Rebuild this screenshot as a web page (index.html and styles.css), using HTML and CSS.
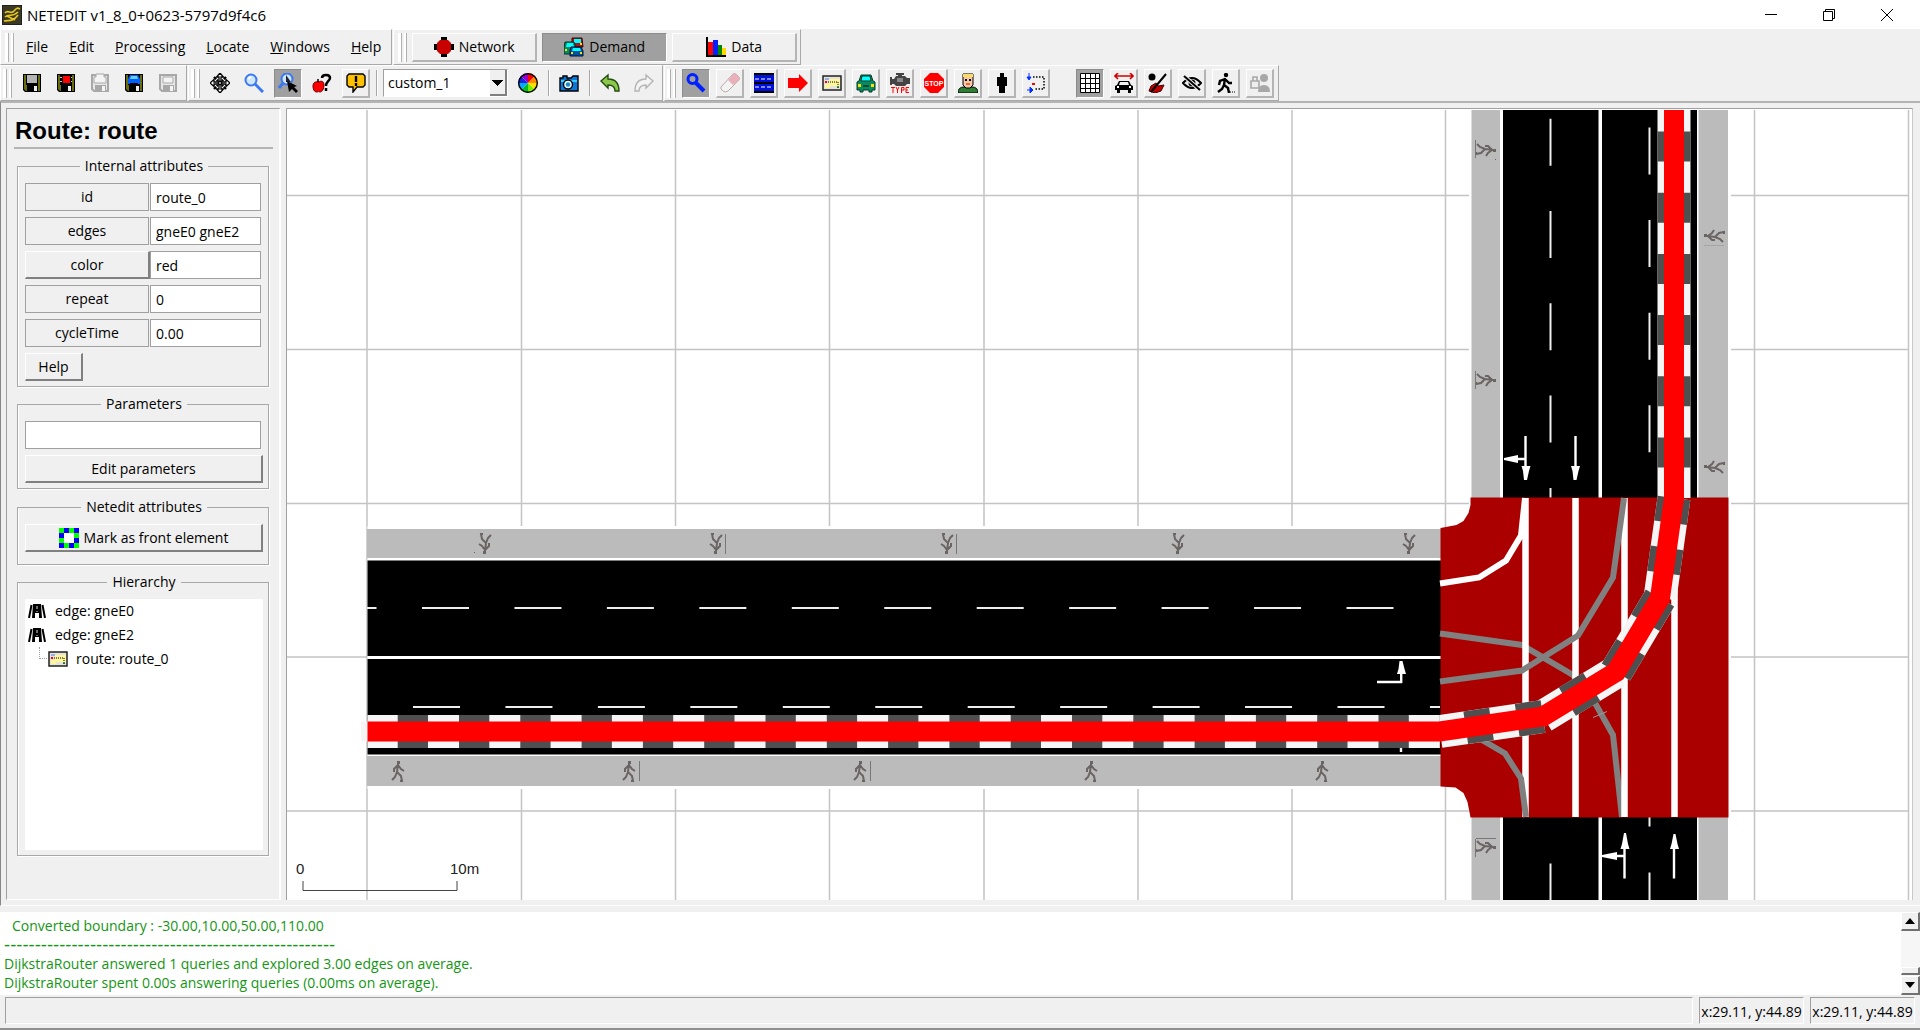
FILE: index.html
```html
<!DOCTYPE html>
<html lang="en">
<head>
	<meta charset="utf-8">
	<meta name="viewport" content="width=device-width, initial-scale=1">
	<title>NETEDIT v1_8_0+0623-5797d9f4c6</title>
	<link rel="stylesheet" href="styles.css">
</head>
<body>

<!-- shared icons -->
<svg class="defs" width="0" height="0" aria-hidden="true">
	<symbol id="i-disk" viewBox="0 0 20 20">
		<path d="M1 1h18v18H3l-2-2z" fill="#000"/>
		<path d="M2 2h16v16H4l-2-2z" fill="#6b6b10"/>
		<path d="M4 1h12v11H4z" fill="#000"/>
		<path d="M5 12h11v7H5z" fill="#000"/>
		<path d="M12 13h3v5h-3z" fill="#eee"/>
	</symbol>
	<symbol id="i-disk-off" viewBox="0 0 20 20">
		<path d="M2 2h16v16H4l-2-2z" fill="#e8e8e8" stroke="#a8a8a8" stroke-width="2"/>
		<path d="M5 12h11v6H5z" fill="#a8a8a8"/>
		<path d="M12 13h3v5h-3z" fill="#f4f4f4"/>
	</symbol>
	<symbol id="i-route" viewBox="0 0 20 20">
		<path d="M1 3h18v14H1z" fill="#e6e2dc" stroke="#222" stroke-width="1.500"/>
		<path d="M7 6h11v7H7zM3 11h5v4H3z" fill="#fff59a"/>
		<path d="M3 5h4v2H3z" fill="#8db4f0"/>
		<path d="M4 9h12M16 9v6" fill="none" stroke="#000" stroke-width="1" stroke-dasharray="1 1"/>
		<path d="M3 8h2v2H3z" fill="#f00"/>
		<path d="M15 14h2v1h-2z" fill="#080"/>
	</symbol>
	<symbol id="i-edge" viewBox="0 0 18 14">
		<path d="M5 0h8l1 14h-3V9H7v5H4z" fill="#000"/>
		<path d="M3.500 1L1 14M14.500 1L17 14" stroke="#000" stroke-width="2" fill="none"/>
		<path d="M9 2v3M9 7v1" stroke="#ddd" stroke-width="1"/>
	</symbol>
	<symbol id="i-carfront" viewBox="0 0 20 20">
		<path d="M5 2h10l2 6 2 1v8h-3v2h-3v-2H7v2H4v-2H1V9l2-1z" fill="#0a8a60" stroke="#003c28"/>
		<path d="M6 3h8l1 5H5z" fill="#0ff" stroke="#003c28"/>
		<path d="M2 11h3v3H2zM15 11h3v3h-3z" fill="#ffe000"/>
		<path d="M7 12h6v2H7z" fill="#004a35"/>
	</symbol>
	<symbol id="walker" viewBox="-10 -11 20 22" overflow="visible">
		<path d="M-1-10h3v3h-3z" fill="#6a6464"/>
		<path d="M0-7L-1 1l4 4 1 5h-2M-1 1l-2 5-3 3M0-6l-4 4v3M0-6l3 4 3 2" fill="none" stroke="#6a6464" stroke-width="2"/>
	</symbol>
</svg>

<header class="titlebar">
	<svg class="logo" viewBox="0 0 20 20"><path d="M0 0h20v20H0z" fill="#222"/><path d="M1 1h18v18H1z" fill="#3b3824"/><path d="M3 8c3-4 6 2 9-2s4-3 6-2M3 12c4-4 7 1 13-5M2 16c5-1 9 1 14-6M5 11l8 4" fill="none" stroke="#e6c81c" stroke-width="1.600"/></svg>
	<span class="title">NETEDIT v1_8_0+0623-5797d9f4c6</span>
	<button class="winbtn" aria-label="Minimize"><svg viewBox="0 0 12 12"><path d="M0 5.500h12" stroke="#000"/></svg></button>
	<button class="winbtn" aria-label="Restore"><svg viewBox="0 0 12 12"><path d="M.5 2.500h9v9h-9zM2.500 2.500v-2h9v9h-2" fill="none" stroke="#000"/></svg></button>
	<button class="winbtn" aria-label="Close"><svg viewBox="0 0 12 12"><path d="M0 0l12 12M12 0L0 12" stroke="#000"/></svg></button>
</header>

<div class="toolrow">
	<nav class="dock menubar">
		<span class="grip"></span>
		<button><u>F</u>ile</button>
		<button><u>E</u>dit</button>
		<button><u>P</u>rocessing</button>
		<button><u>L</u>ocate</button>
		<button><u>W</u>indows</button>
		<button><u>H</u>elp</button>
	</nav>
	<div class="dock modes">
		<span class="grip"></span>
		<button class="mode">
			<svg viewBox="0 0 20 20"><path d="M7 0h6v20H7zM0 7h20v6H0z" fill="#000"/><path d="M6 3h8l3 3v8l-3 3H6l-3-3V6z" fill="#c80000"/></svg>
			Network
		</button>
		<button class="mode pressed">
			<svg viewBox="0 0 20 20">
				<path d="M8 1h10l1 9H8z" fill="#a01818" stroke="#400"/><path d="M10 2h7v4h-7z" fill="#0ff"/>
				<path d="M1 5h9l2 6v6H0v-6z" fill="#0a8a60" stroke="#033"/><path d="M3 6h6l1 4H2z" fill="#0ff"/><path d="M1 12h2v2H1zM16 6h2v2h-2z" fill="#ffe000"/>
				<path d="M7 10h10l2 4v5H6v-5z" fill="#0050a0" stroke="#013"/><path d="M9 11h7l1 3H8z" fill="#0ff"/><path d="M7 15h2v2H7zM16 15h2v2h-2z" fill="#ffe000"/>
			</svg>
			Demand
		</button>
		<button class="mode">
			<svg viewBox="0 0 20 20"><path d="M2 5h5v14H2z" fill="#f00"/><path d="M7 3h5v16H7z" fill="#0020ff"/><path d="M12 8h4v11h-4z" fill="#080"/><path d="M16 11h4v8h-4z" fill="#ffd800"/><path d="M1 0v19h19" fill="none" stroke="#000" stroke-width="2"/></svg>
			Data
		</button>
	</div>
</div>

<div class="toolrow">
	<div class="dock">
		<span class="grip"></span>
		<button class="tool flat" aria-label="Save network"><svg viewBox="0 0 20 20"><use href="#i-disk"/><path d="M5 2h10v8H5z" fill="#b4b4b4"/></svg></button>
		<button class="tool flat" aria-label="Save additionals"><svg viewBox="0 0 20 20"><use href="#i-disk"/><path d="M7 3h7v7H7z" fill="#f00"/><path d="M4 4h2v1H4zM4 8h2v1H4zM15 4h1v1h-1zM15 8h1v1h-1z" fill="#ccc"/></svg></button>
		<button class="tool flat" aria-label="Save TLS programs"><svg viewBox="0 0 20 20"><use href="#i-disk-off"/><path d="M6 1h8v3h2v6H4V4h2z" fill="#f4f4f4" stroke="#a8a8a8"/></svg></button>
		<button class="tool flat" aria-label="Save demand elements"><svg viewBox="0 0 20 20"><use href="#i-disk"/><path d="M6 2h8l2 4v5h-2v-1H6v1H4V6z" fill="#0060ff"/><path d="M7 3h6l1 3H6z" fill="#6cf"/></svg></button>
		<button class="tool flat" aria-label="Save data elements"><svg viewBox="0 0 20 20"><use href="#i-disk-off"/><path d="M5 4h10v6H5z" fill="#f4f4f4" stroke="#a8a8a8"/></svg></button>
	</div>
	<div class="dock">
		<span class="grip"></span>
		<button class="tool flat" aria-label="Recenter view"><svg viewBox="0 0 20 20"><g fill="#fff" stroke="#000" stroke-width="1.300"><path id="mv" d="M10 0l3.500 4H11v4.500H9V4H6.500z"/><use href="#mv" transform="rotate(90 10 10)"/><use href="#mv" transform="rotate(180 10 10)"/><use href="#mv" transform="rotate(270 10 10)"/></g><path d="M4 4l4 4M16 4l-4 4M4 16l4-4M16 16l-4-4" stroke="#000" stroke-width="2.400" stroke-dasharray="3 1"/></svg></button>
		<button class="tool flat" aria-label="Edit viewport"><svg viewBox="0 0 20 20"><circle cx="7" cy="7" r="5.500" fill="#cfe6ff" stroke="#3c78f0" stroke-width="2"/><path d="M11 11l8 8" stroke="#3c78f0" stroke-width="3"/><path d="M4 6l3-2" stroke="#fff" stroke-width="2"/></svg></button>
		<button class="tool pressed" aria-label="Zoom style"><svg viewBox="0 0 20 20"><circle cx="9" cy="6" r="5.500" fill="#cfe6ff" stroke="#3c78f0" stroke-width="2"/><path d="M5 10l-4 5" stroke="#3c78f0" stroke-width="3"/><path d="M8 2l5 7H8z" fill="#223"/><path d="M9 8l10 5-3 1 4 4-2 2-4-4-3 3z" fill="#000"/></svg></button>
		<button class="tool flat" aria-label="What is this"><svg viewBox="0 0 20 20"><path d="M7 9c3-2 5 0 5 3 0 4-2 7-4 7-1 0-1-1-3 0-3 0-4-3-4-6s2-5 6-4z" fill="#f00" stroke="#600"/><path d="M6 9V6" stroke="#000" stroke-width="1.500"/><path d="M10 5c0-4 8-4 8 0 0 3-4 3-4 8M14 15v3" fill="none" stroke="#000" stroke-width="2.500"/></svg></button>
		<button class="tool" aria-label="Messages"><svg viewBox="0 0 20 20"><path d="M3 1h14l2 2v9l-2 2h-6l-4 5v-5H3l-2-2V3z" fill="#ffc000" stroke="#000" stroke-width="1.400"/><path d="M10 3v6M10 10v3" stroke="#000" stroke-width="2.400"/></svg></button>
		<span class="sep"></span>
		<select class="scheme" aria-label="Coloring scheme"><option>custom_1</option></select>
		<button class="tool flat" aria-label="Edit coloring"><svg viewBox="0 0 20 20"><path d="M10 10V0A10 10 0 0 1 17 3z" fill="#f00"/><path d="M10 10l7-7a10 10 0 0 1 3 7z" fill="#f80"/><path d="M10 10h10a10 10 0 0 1-3 7z" fill="#ffe000"/><path d="M10 10l7 7a10 10 0 0 1-7 3z" fill="#7e0"/><path d="M10 10v10a10 10 0 0 1-7-3z" fill="#0b2"/><path d="M10 10l-7 7a10 10 0 0 1-3-7z" fill="#0af"/><path d="M10 10H0a10 10 0 0 1 3-7z" fill="#22d"/><path d="M10 10L3 3a10 10 0 0 1 7-3z" fill="#90c"/><circle cx="10" cy="10" r="9.300" fill="none" stroke="#000" stroke-width="1.400"/></svg></button>
		<span class="sep"></span>
		<button class="tool flat" aria-label="Snapshot"><svg viewBox="0 0 20 20"><path d="M1 5h3V3h4v2h4l2-2h5v15H1z" fill="#0a78d8" stroke="#000" stroke-width="1.400"/><path d="M2 7h16v2H2z" fill="#3cf"/><circle cx="9" cy="11.500" r="4.500" fill="#dff" stroke="#000" stroke-width="1.400"/><circle cx="9" cy="11.500" r="2.200" fill="#28c"/></svg></button>
		<span class="sep"></span>
		<button class="tool flat" aria-label="Undo"><svg viewBox="0 0 20 20"><path d="M1 8l7-6v4c7 0 11 4 11 12h-4c0-4-2-6-7-6v3z" fill="#8cc84a" stroke="#234d10" stroke-width="1.400"/></svg></button>
		<button class="tool flat" aria-label="Redo"><svg viewBox="0 0 20 20"><path d="M19 8l-7-6v4C5 6 1 10 1 18h4c0-4 2-6 7-6v3z" fill="#f4f4f4" stroke="#b4b4b4" stroke-width="1.400"/></svg></button>
	</div>
	<div class="dock">
		<span class="grip"></span>
		<button class="tool pressed" aria-label="Inspect"><svg viewBox="0 0 20 20"><circle cx="6.500" cy="6" r="4.500" fill="none" stroke="#0020ff" stroke-width="3"/><path d="M10 10l8 8" stroke="#0020ff" stroke-width="4"/></svg></button>
		<button class="tool" aria-label="Delete"><svg viewBox="0 0 20 20"><path d="M1 14L13 1q2-1 3 0l3 3q1 2 0 3L8 18q-3 2-5 0l-2-2z" fill="#f3f3f3" stroke="#b8acac"/><path d="M8 7l5-6q2-1 3 0l3 3q1 2 0 3l-6 5z" fill="#eab0ba"/></svg></button>
		<button class="tool" aria-label="Edges"><svg viewBox="0 0 20 20"><path d="M0 0h20v20H0z" fill="#000"/><path d="M0 2h20v7H0zM0 11h20v7H0z" fill="#0010d8"/><path d="M1 6h18M1 14h18" stroke="#fff" stroke-width="1" stroke-dasharray="4 2"/></svg></button>
		<button class="tool" aria-label="Move to route"><svg viewBox="0 0 20 20"><path d="M0 5h11V1l9 9-9 9v-4H0z" fill="#f00"/></svg></button>
		<button class="tool" aria-label="Routes"><svg viewBox="0 0 20 20"><use href="#i-route"/></svg></button>
		<button class="tool" aria-label="Vehicles"><svg viewBox="0 0 20 20"><use href="#i-carfront"/></svg></button>
		<button class="tool" aria-label="Vehicle types"><svg viewBox="0 0 20 20"><path d="M6 0h8v2h-2v1h3l2 2h3v6h-3l-2 2H6l-2-2H2v1H0V4h2v2h2l2-3h2V2H6z" fill="#444"/><path d="M7 5h6v4H7z" fill="#888"/><path d="M1 14.500h4M3 14v6M6 14l1.500 3L9 14M7.500 17v3M11.500 20v-5.500H14V17h-2.500M19 14.500h-3V19.500h3M16 17h2" fill="none" stroke="#f00"/></svg></button>
		<button class="tool" aria-label="Stops"><svg viewBox="0 0 20 20"><path d="M6 0h8l6 6v8l-6 6H6l-6-6V6z" fill="#f00"/><text x="10" y="13" class="stoptext">STOP</text></svg></button>
		<button class="tool" aria-label="Persons"><svg viewBox="0 0 20 20"><path d="M0 20q0-6 6-6h8q6 0 6 6z" fill="#2e7d32" stroke="#000"/><path d="M5 1h10v11l-3 3H8l-3-3z" fill="#f8c8a0" stroke="#000"/><path d="M5 1h10v3H5z" fill="#f6dc60"/><path d="M7 6h2v2H7zM11 6h2v2h-2z" fill="#000"/><path d="M8 11h4" stroke="#c00"/></svg></button>
		<button class="tool" aria-label="Person plans"><svg viewBox="0 0 20 20"><path d="M8 0h4v4h-4zM5 4h10v9h-2v7H7v-7H5z" fill="#000"/></svg></button>
		<button class="tool" aria-label="Person stops"><svg viewBox="0 0 20 20"><path d="M3 0v6M1 4l2 3 2-3zM1 17h5M4 14l3 3-3 3z" fill="#0030ff" stroke="#0030ff"/><path d="M7 4h11v12H9" fill="none" stroke="#000" stroke-width="1.500" stroke-dasharray="1.500 1.500"/><path d="M6 10h3v2H6z" fill="#f00"/></svg></button>
		<span class="space"></span>
		<button class="tool pressed" aria-label="Toggle grid"><svg viewBox="0 0 20 20"><path d="M.5.5h19v19H.5z" fill="#fff"/><path d="M.5.5h19v19H.5zM5.500 0v20M10.500 0v20M15.500 0v20M0 5.500h20M0 10.500h20M0 15.500h20" fill="none" stroke="#000"/></svg></button>
		<button class="tool" aria-label="Spread vehicles"><svg viewBox="0 0 20 20"><path d="M1 3h18M4 0L1 3l3 3M16 0l3 3-3 3" fill="none" stroke="#d00000" stroke-width="1.600"/><path d="M5 8h10l2 4 2 1v4h-2v3h-3v-3H6v3H3v-3H1v-4l2-1z" fill="#000"/><path d="M6 9h8l1 3H5z" fill="#f0f0f0"/><path d="M3 13h2v2H3zM15 13h2v2h-2z" fill="#fff"/></svg></button>
		<button class="tool" aria-label="Hide shapes"><svg viewBox="0 0 20 20"><circle cx="4" cy="4" r="3.500" fill="#000"/><path d="M3 13l5-3 2 3 6-1-3 6-6 2-6-2z" fill="#c00000" stroke="#400"/><path d="M18 1L3 19" stroke="#000" stroke-width="2"/></svg></button>
		<button class="tool" aria-label="Hide non inspected"><svg viewBox="0 0 20 20"><path d="M1 10q9-10 18 0-9 10-18 0z" fill="none" stroke="#000" stroke-width="2"/><circle cx="10" cy="10" r="3.500" fill="#000"/><path d="M2 3l16 14" stroke="#f0f0f0" stroke-width="4"/><path d="M2 3l16 14" stroke="#000" stroke-width="2"/></svg></button>
		<button class="tool" aria-label="Show person plans"><svg viewBox="0 0 20 20"><circle cx="10" cy="2" r="2.200" fill="#000"/><path d="M9 5l-1 7 4 3 1 5M8 12l-2 4-4 3M9 6L4 8l-1 4M9 6l4 4h3" fill="none" stroke="#000" stroke-width="2.400"/><path d="M14 19h5" stroke="#000" stroke-dasharray="1 1"/></svg></button>
		<button class="tool" aria-label="Lock person"><svg viewBox="0 0 20 20"><path d="M1 8h8v7H1zM3 8V4h4v4" fill="#eee" stroke="#a8a8a8" stroke-width="1.600"/><circle cx="14" cy="5" r="4" fill="#a8a8a8"/><path d="M8 19q0-7 6-7t6 7z" fill="#a8a8a8"/></svg></button>
	</div>
</div>

<main class="workspace">
	<aside class="sidebar">
		<h1>Route: route</h1>

		<fieldset>
			<legend>Internal attributes</legend>
			<div class="attrs">
				<label for="id">id</label><input id="id" type="text" value="route_0">
				<label for="edges">edges</label><input id="edges" type="text" value="gneE0 gneE2">
				<button class="btn">color</button><input type="text" aria-label="color" value="red">
				<label for="repeat">repeat</label><input id="repeat" type="text" value="0">
				<label for="cycleTime">cycleTime</label><input id="cycleTime" type="text" value="0.00">
			</div>
			<button class="btn help">Help</button>
		</fieldset>

		<fieldset>
			<legend>Parameters</legend>
			<input class="wide" type="text" aria-label="Parameters">
			<button class="btn wide">Edit parameters</button>
		</fieldset>

		<fieldset class="netedit">
			<legend>Netedit attributes</legend>
			<button class="btn wide">
				<svg viewBox="0 0 20 20" width="20" height="20"><path d="M0 0h20v20H0z" fill="#00ff00"/><path d="M5 0h5v5H5zM15 0h5v5h-5zM0 5h5v5H0zM15 10h5v5h-5zM0 15h5v5H0zM10 15h5v5h-5z" fill="#0000ff"/><path d="M5 5h10v10H5z" fill="#fff"/></svg>
				Mark as front element
			</button>
		</fieldset>

		<fieldset class="hierarchy">
			<legend>Hierarchy</legend>
			<ul class="tree">
				<li><svg class="edge"><use href="#i-edge"/></svg>edge: gneE0</li>
				<li><svg class="edge"><use href="#i-edge"/></svg>edge: gneE2</li>
				<li><span class="branch"></span><svg class="route"><use href="#i-route"/></svg>route: route_0</li>
			</ul>
		</fieldset>
	</aside>

	<section class="view">
		<svg class="map" width="100%" height="100%">
			<g transform="translate(-287 -109)">
				<!-- grid, 10m -->
				<path class="grid" d="M367 110v790M521.500 110v790M675.500 110v790M829.500 110v790M984 110v790M1138 110v790M1292 110v790M1445.500 110v790M1754.500 110v790M1908.500 110v790M287 195.500h1622M287 349.500h1622M287 503.500h1622M287 657h1622M287 811h1622"/>

				<!-- halo around the lanes -->
				<path d="M367.500 526H1441v263H367.500zM1469 110h262v790h-262z" fill="#fff"/>

				<!-- west road -->
				<path d="M367 529h1074v29H367zM367 756h1074v30H367z" fill="#bbb"/>
				<path d="M367.500 560.500H1441V656H367.500zM367.500 659H1441v95.500H367.500z" fill="#000"/>
				<path class="mark" d="M367 608h9.500"/>
				<path class="mark" d="M422 608h973" stroke-dasharray="47 45.450"/>
				<path class="mark" d="M413 707h1027" stroke-dasharray="47 45.450"/>

				<!-- north and south road -->
				<path d="M1471.500 110h28.500v388h-28.500zM1698.500 110h29.500v388h-29.500zM1471.500 817h28.500v83h-28.500zM1698.500 817h29.500v83h-29.500z" fill="#bbb"/>
				<path d="M1503 110h95.500v388H1503zM1602 110h95v388h-95zM1503 817h95.500v83H1503zM1602 817h95v83h-95z" fill="#000"/>
				<path class="mark" d="M1550.500 118.700v379" stroke-dasharray="47 45.300"/>
				<path class="mark" d="M1649.500 127.500v330" stroke-dasharray="47 45.600"/>
				<path class="mark" d="M1550.500 863.500V900M1649.500 817v9.500M1649.500 872.500V900"/>

				<!-- turn arrows -->
				<g stroke="#fff" stroke-width="2.400" fill="none">
					<path d="M1525.500 436v34M1575.500 436v34M1526 459h-12M1624.500 878.500V845M1674 878.500V845M1624 856h-12M1377 682h25M1401.200 683v-14M1401 747v5"/>
				</g>
				<path d="M1521.500 466h9l-1.500 5-2 9h-3l-1-9zM1571 466h9l-1.500 5-2 9h-3l-1-9zM1518 455v8l-14-3v-2zM1620.500 849h9l-1.500-5-2-11h-2l-2 11zM1670 849h9l-1.500-5-2-10h-2l-2 10zM1617 852v8l-15-3v-2zM1397 674h9l-1.500-5-2-8h-3l-1 8z" fill="#fff"/>

				<!-- sidewalk figures -->
				<g>
					<use href="#walker" x="388" y="760" width="20" height="22"/>
					<use href="#walker" x="619" y="760" width="20" height="22"/>
					<use href="#walker" x="850" y="760" width="20" height="22"/>
					<use href="#walker" x="1081" y="760" width="20" height="22"/>
					<use href="#walker" x="1312" y="760" width="20" height="22"/>
					<g transform="rotate(180 485 543.500)"><use href="#walker" x="475" y="532" width="20" height="22"/></g>
					<g transform="rotate(180 716 543.500)"><use href="#walker" x="706" y="532" width="20" height="22"/></g>
					<g transform="rotate(180 947 543.500)"><use href="#walker" x="937" y="532" width="20" height="22"/></g>
					<g transform="rotate(180 1178 543.500)"><use href="#walker" x="1168" y="532" width="20" height="22"/></g>
					<g transform="rotate(180 1409 543.500)"><use href="#walker" x="1399" y="532" width="20" height="22"/></g>
					<g transform="rotate(90 1486 150)"><use href="#walker" x="1476" y="139" width="20" height="22"/></g>
					<g transform="rotate(90 1486 380)"><use href="#walker" x="1476" y="369" width="20" height="22"/></g>
					<g transform="rotate(90 1486 847)"><use href="#walker" x="1476" y="836" width="20" height="22"/></g>
					<g transform="rotate(-90 1714 236)"><use href="#walker" x="1704" y="225" width="20" height="22"/></g>
					<g transform="rotate(-90 1714 467)"><use href="#walker" x="1704" y="456" width="20" height="22"/></g>
				</g>
				<path d="M639.500 761v20M870.500 761v20M725.500 534v20M956.500 534v20M1475.500 140v18M1475.500 371v18M1475.500 839v18M1476 838.500h20" stroke="#777" fill="none"/>
				<path d="M1704 245.500h20" stroke="#a5a5a5"/>
				<path d="M474 552h1v1h-1zM1495 159h1v1h-1z" fill="#666"/>

				<!-- junction -->
				<path d="M1440.500 528l16-3 7-4 5-8 2-8v-7.500h258v320h-258l-3-15.500-4-9-8-5.500-15-1z" fill="#a00"/>
				<g fill="none" stroke-width="6">
					<path d="M1440 633.500l82 11.500 51 30 22 28 18 32 9 82" stroke="#808080"/>
					<path d="M1525.500 498v319M1575.500 498v319M1624.500 498v319M1674.500 498v319" stroke="#fff" stroke-width="6.500"/>
					<path d="M1440 583.500l39-6 27-17 15-25 4-37.500" stroke="#fff"/>
					<path d="M1440 681.500l82-11 56-35 35-58 11-79.500M1482 740l23 13.500 16 25 5 38.500" stroke="#808080"/>
					<path d="M1593 717.500l14-6" stroke="#999" stroke-width="1"/>
				</g>

				<!-- route_0 -->
				<path d="M361 721.500h7v20h-7z" fill="#f5f5f5"/>
				<g fill="none" stroke="#f5f5f5" stroke-width="33">
					<path d="M367.500 731.500H1440M1674 110v388M1440 731.500l103-15M1543 716.500l73-44.500M1616 672l44-74M1660 598l14-100"/>
				</g>
				<g fill="none" stroke="#4f4f4f" stroke-width="33">
					<path d="M397.700 731.500H1440" stroke-dasharray="30.300 31"/>
					<path d="M1674 131.500V498" stroke-dasharray="30 31.200"/>
					<path d="M1440 731.500l103-15" stroke-dasharray="0 26 26 26 26"/>
					<path d="M1543 716.500l73-44.500" stroke-dasharray="0 28.500 28.500 28.500"/>
					<path d="M1616 672l44-74" stroke-dasharray="28.700 28.700"/>
				</g>
				<path d="M1660 598l14-100" fill="none" stroke="#4f4f4f" stroke-width="33" stroke-dasharray="0 25.300 25.300 25.300 25.300 0"/>
				<path d="M367.500 731.500H1440l103-15 73-44.500 44-74 14-100V110" fill="none" stroke="#f00" stroke-width="20"/>

				<!-- scale -->
				<path d="M303 881v9.500h154V881" fill="none" stroke="#444"/>
				<text class="scale" x="296" y="874">0</text>
				<text class="scale" x="450" y="874">10m</text>
			</g>
		</svg>
	</section>
</main>

<section class="log">
	<div class="messages">
		<p class="indent">Converted boundary : -30.00,10.00,50.00,110.00</p>
		<p class="rule">------------------------------------------------------</p>
		<p>DijkstraRouter answered 1 queries and explored 3.00 edges on average.</p>
		<p>DijkstraRouter spent 0.00s answering queries (0.00ms on average).</p>
	</div>
	<div class="scrollbar">
		<button aria-label="Scroll up"><svg viewBox="0 0 10 6"><path d="M0 6l5-6 5 6z"/></svg></button>
		<span class="track"></span>
		<span class="thumb"></span>
		<button aria-label="Scroll down"><svg viewBox="0 0 10 6"><path d="M0 0l5 6 5-6z"/></svg></button>
	</div>
</section>

<footer class="statusbar">
	<span class="field status"></span>
	<span class="field coords">x:29.11, y:44.89</span>
	<span class="field coords">x:29.11, y:44.89</span>
</footer>

</body>
</html>
```
FILE: styles.css
```css
* {
	box-sizing: border-box;
}
body {
	margin: 0;
	height: 100vh;
	display: flex;
	flex-direction: column;
	overflow: hidden;
	background: #f0f0f0;
	color: #000;
	font: 14px/20px "Open Sans", sans-serif;
}
button, input, select {
	font: inherit;
	color: inherit;
	margin: 0;
	padding: 0;
	border: 0;
	background: none;
}
.defs {
	position: absolute;
}

/* title bar */
.titlebar {
	display: flex;
	align-items: center;
	height: 29px;
	padding: 0 4px 0 2px;
	background: #fff;
}
.logo {
	width: 20px;
	height: 20px;
}
.title {
	flex: 1;
	padding-left: 5px;
	font-size: 15px;
}
.winbtn {
	width: 58px;
	height: 28px;
}
.winbtn svg {
	display: block;
	width: 12px;
	height: 12px;
	margin: 0 auto;
}

/* toolbars */
.toolrow {
	display: flex;
	gap: 1px;
	height: 36px;
}
.dock {
	display: flex;
	align-items: center;
	gap: 6px;
	height: 36px;
	padding: 0 4px 0 2px;
	border: 1px solid #a8a8a8;
	border-top-color: #fff;
	border-left-color: #fff;
}
.grip {
	width: 9px;
	height: 29px;
	border: solid #b0b0b0;
	border-width: 0 1px;
	background: linear-gradient(90deg, #fff 2px, #b0b0b0 2px, #b0b0b0 3px, #f0f0f0 3px, #f0f0f0 5px, #fff 5px);
	border-left-color: #fff;
}
.menubar {
	gap: 1px;
	padding: 0 0 0 4px;
}
.menubar button {
	padding: 0 10px;
}
.menubar .grip {
	margin-right: 1px;
}
.modes {
	gap: 5px;
	padding: 0 3px 0 4px;
}
.mode, .tool {
	display: flex;
	align-items: center;
	justify-content: center;
	height: 29px;
	border: 1px solid #fff;
	border-right: 2px solid #b4b4b4;
	border-bottom: 2px solid #b4b4b4;
}
.mode {
	width: 125px;
	gap: 5px;
}
.mode svg, .tool svg {
	width: 20px;
	height: 20px;
	flex: none;
}
.tool {
	width: 28px;
}
.flat {
	border-color: transparent;
}
.pressed {
	background: #a0a0a0;
	border: 1px solid #8c8c8c;
	border-right-color: #fff;
	border-bottom-color: #fff;
}
.sep {
	width: 2px;
	height: 26px;
	margin-right: -1px;
	border-left: 1px solid #a8a8a8;
	border-right: 1px solid #fff;
}
.space {
	width: 14px;
}
.scheme {
	width: 125px;
	height: 28px;
	padding-left: 4px;
	appearance: none;
	border: 1px solid #a0a0a0;
	border-right-color: #fff;
	border-bottom-color: #fff;
	border-radius: 0;
	background:
		linear-gradient(#808080, #808080) right 0 top 0 / 2px 100% no-repeat,
		linear-gradient(#808080, #808080) right 0 bottom 0 / 17px 2px no-repeat,
		conic-gradient(from -45deg at 50% 100%, #000 90deg, transparent 0) right 4px top 10px / 11px 6px no-repeat,
		linear-gradient(#f0f0f0, #f0f0f0) right 0 top 0 / 17px 100% no-repeat,
		#fff;
}
.stoptext {
	font: bold 7px "Liberation Sans", sans-serif;
	fill: #fff;
	text-anchor: middle;
}

/* workspace */
.workspace {
	flex: 1;
	display: flex;
	gap: 5px;
	min-height: 0;
	margin-bottom: 6px;
	padding: 5px 7px 5px 5px;
	border-top: 2px solid #b4b4b4;
	border-left: 1px solid #888;
	border-bottom: 1px solid #fff;
}
.sidebar {
	display: flex;
	flex-direction: column;
	width: 275px;
	padding: 0 6px 0 7px;
	border: 1px solid #a0a0a0;
	border-right: 2px solid #fff;
	border-bottom: 1px solid #fff;
}
.sidebar h1 {
	margin: 0;
	padding: 8px 1px 3px;
	border-bottom: 2px solid #b4b4b4;
	font: bold 24px/27px "Liberation Sans", sans-serif;
}
fieldset {
	min-width: 0;
	margin: 7px 4px 0 3px;
	padding: 7px 5px 5px 7px;
	border: 1px solid #a8a8a8;
	box-shadow: inset 1px 0 #fff, 1px 1px #fff;
}
legend {
	margin: 0 auto;
	padding: 0 5px;
	line-height: 20px;
}
.attrs {
	display: grid;
	grid-template-columns: 125px 1fr;
	gap: 6px 0;
}
.attrs label, .attrs input, .wide {
	height: 28px;
}
.attrs label {
	margin-right: 1px;
	border: 1px solid #a0a0a0;
	line-height: 26px;
	text-align: center;
}
.sidebar input {
	min-width: 0;
	margin-right: 2px;
	padding: 0 5px;
	border: 1px solid #a0a0a0;
	background: #fff;
}
.btn {
	display: flex;
	align-items: center;
	justify-content: center;
	gap: 5px;
	height: 28px;
	border: 1px solid #fff;
	border-right: 2px solid #808080;
	border-bottom: 2px solid #808080;
	background: #f0f0f0;
}
.help {
	width: 58px;
	margin-top: 6px;
}
.wide {
	width: 100%;
}
input.wide {
	width: calc(100% - 2px);
	display: block;
	margin-bottom: 6px;
}
.netedit {
	margin-top: 8px;
	padding-bottom: 12px;
}
.hierarchy {
	flex: 1;
	margin-bottom: 43px;
}
.tree {
	height: 100%;
	margin: 0;
	padding: 0;
	background: #fff;
	list-style: none;
}
.tree li {
	display: flex;
	align-items: center;
	height: 24px;
	padding-left: 3px;
}
.edge {
	width: 18px;
	height: 14px;
	margin-right: 9px;
}
.route {
	width: 20px;
	height: 20px;
	margin-right: 8px;
}
.branch {
	width: 8px;
	height: 12px;
	margin: 0 1px 12px 11px;
	border: dotted #a0a0a0;
	border-width: 0 0 1px 1px;
}
.view {
	flex: 1;
	min-width: 0;
	border: 1px solid #a0a0a0;
	border-right: 1px solid #c8c8c8;
	border-bottom: 0;
	background: #fff;
}
.map {
	display: block;
}
.grid {
	fill: none;
	stroke: #c4c4c4;
	stroke-width: 1.5px;
}
.mark {
	fill: none;
	stroke: #eee;
	stroke-width: 2px;
}
.scale {
	font: 15px "Liberation Sans", sans-serif;
	fill: #222;
}

/* message log */
.log {
	display: flex;
	height: 83px;
	background: #fff;
	color: #149614;
}
.messages {
	flex: 1;
	padding: 4px 4px 0;
}
.messages p {
	margin: 0;
	height: 19px;
	line-height: 19px;
}
.messages .indent {
	padding-left: 8px;
}
.messages .rule {
	font-family: "DejaVu Sans", sans-serif;
	font-size: 17px;
}
.scrollbar {
	display: flex;
	flex-direction: column;
	width: 19px;
	background: #f6f6f6;
}
.scrollbar button, .thumb {
	height: 19px;
	border: 1px solid #fff;
	border-right: 2px solid #707070;
	border-bottom: 2px solid #707070;
	background: #f0f0f0;
}
.scrollbar svg {
	display: block;
	width: 10px;
	height: 6px;
	margin: 0 auto;
}
.track {
	flex: 1;
}
.thumb {
	height: 8px;
	margin-bottom: 1px;
}

/* status bar */
.statusbar {
	display: flex;
	gap: 6px;
	height: 35px;
	padding: 2px 5px 4px;
	border-bottom: 2px solid #909090;
}
.field {
	border: 1px solid #a0a0a0;
	border-right-color: #fff;
	border-bottom-color: #fff;
	line-height: 28px;
}
.status {
	flex: 1;
}
.coords {
	width: 105px;
	text-align: center;
	white-space: nowrap;
}
```
